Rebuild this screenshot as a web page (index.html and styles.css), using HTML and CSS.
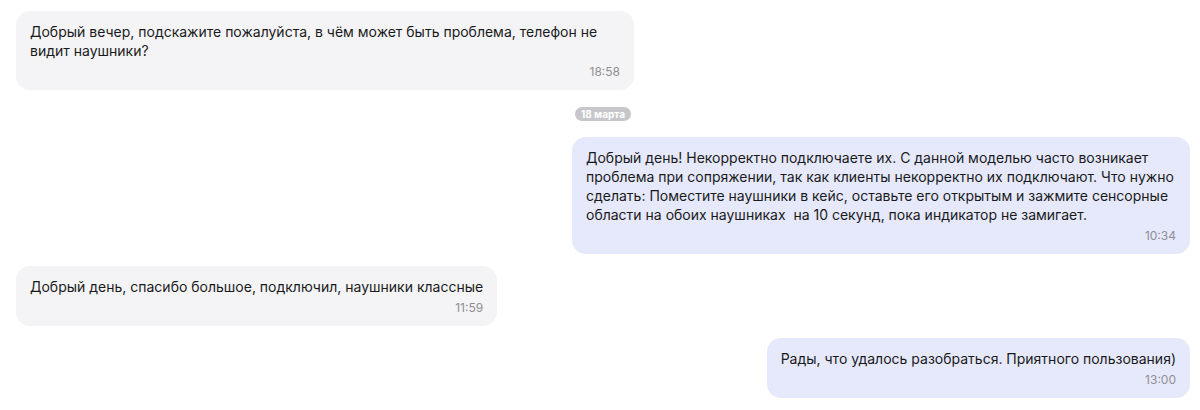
FILE: index.html
```html
<!DOCTYPE html>
<html lang="ru">
<head>
<meta charset="utf-8">
<title>Чат</title>
<link rel="stylesheet" href="styles.css">
</head>
<body>
<div class="chat">
  <div class="msg msg-in gap-date">
    <div class="msg-text">Добрый вечер, подскажите пожалуйста, в чём может быть проблема, телефон не видит наушники?</div>
    <div class="msg-time">18:58</div>
  </div>
  <div class="date-row">
    <span class="date-pill">18 марта</span>
  </div>
  <div class="msg msg-out">
    <div class="msg-text">Добрый день! Некорректно подключаете их. С данной моделью часто возникает проблема при сопряжении, так как клиенты некорректно их подключают. Что нужно сделать: Поместите наушники в кейс, оставьте его открытым и зажмите сенсорные области на обоих наушниках&nbsp; на 10 секунд, пока индикатор не замигает.</div>
    <div class="msg-time">10:34</div>
  </div>
  <div class="msg msg-in">
    <div class="msg-text">Добрый день, спасибо большое, подключил, наушники классные</div>
    <div class="msg-time">11:59</div>
  </div>
  <div class="msg msg-out">
    <div class="msg-text">Рады, что удалось разобраться. Приятного пользования)</div>
    <div class="msg-time">13:00</div>
  </div>
</div>
</body>
</html>
```

FILE: styles.css
```css
* {
  box-sizing: border-box;
}

html, body {
  margin: 0;
  padding: 0;
  background: #ffffff;
}

body {
  font-family: Inter, "Noto Sans", "Liberation Sans", sans-serif;
  color: #1a1a1c;
}

.chat {
  display: flex;
  flex-direction: column;
  gap: 12px;
  padding: 11px 10px 0 16px;
}

.msg {
  max-width: 618px;
  border-radius: 14px;
  padding: 11px 14px 10px 14px;
}

.msg-in {
  align-self: flex-start;
  background: #f4f4f6;
}

.msg-out {
  align-self: flex-end;
  background: #e6e9fb;
}

.gap-date {
  margin-bottom: 5px;
}

.msg-text {
  font-size: 14px;
  line-height: 19px;
  letter-spacing: 0;
}

.msg-time {
  margin-top: 4px;
  text-align: right;
  font-size: 12px;
  line-height: 16px;
  color: #8e8e93;
}

.date-row {
  display: flex;
  justify-content: center;
  margin-bottom: 4px;
}

.date-pill {
  background: #c7c7cb;
  color: #ffffff;
  font-size: 10px;
  font-weight: 700;
  line-height: 14px;
  padding: 0 6px;
  border-radius: 7px;
}
```
